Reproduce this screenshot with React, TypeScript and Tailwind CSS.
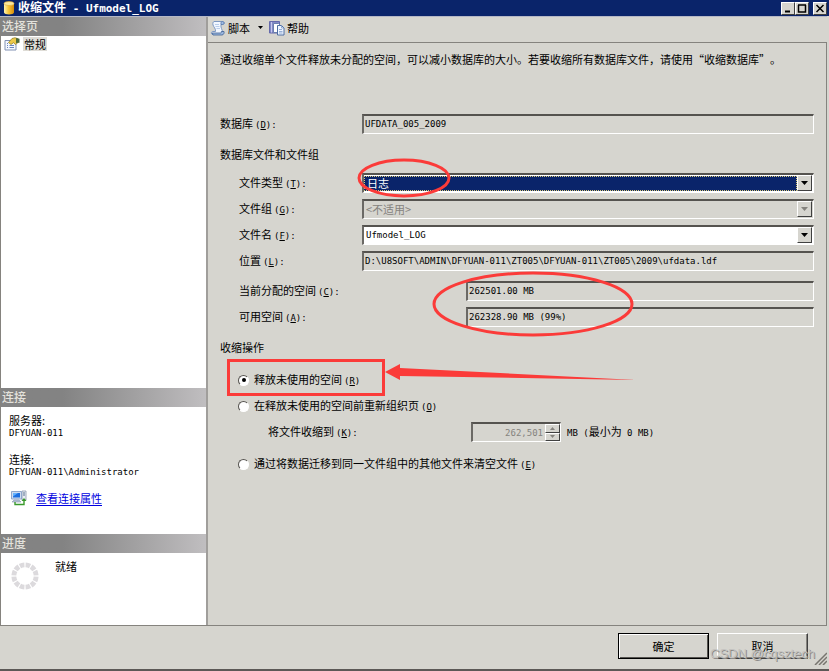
import type { ReactNode } from "react";

const MONO = "font-['DejaVu_Sans_Mono',monospace] text-[9px]";
const FIELD =
  "block h-5 min-w-0 flex-1 border border-t-2 border-t-[#55534f] border-l-2 border-l-[#6b6965] border-r-white border-b-white bg-[#d6d5cf] pl-px leading-4 pb-0.5 outline-none";
const RAISED = "border border-t-white border-l-white border-r-[#404040] border-b-[#404040] bg-[#d6d5cf]";

function Key({ k, colon = true }: { k: string; colon?: boolean }) {
  return (
    <span className={`${MONO} ml-0.5`}>
      (<u className="underline-offset-1">{k}</u>){colon && ":"}
    </span>
  );
}

function Row({ id, label, k, wide, children }: { id: string; label: string; k: string; wide?: boolean; children: ReactNode }) {
  return (
    <div className="flex h-5 items-center">
      <label htmlFor={id} className={wide ? "w-[227px] shrink-0" : "w-[123px] shrink-0"}>
        {label}
        <Key k={k} />
      </label>
      {children}
    </div>
  );
}

function Combo({ id, value, selected, disabled, mono }: { id: string; value: string; selected?: boolean; disabled?: boolean; mono?: boolean }) {
  return (
    <div
      className={`relative flex h-5 min-w-0 flex-1 border border-t-2 border-t-[#55534f] border-l-2 border-l-[#6b6965] border-r-white border-b-white ${
        disabled ? "bg-[#d6d5cf]" : "bg-white"
      }`}
    >
      <select
        id={id}
        disabled={disabled}
        className={`my-px min-w-0 flex-1 appearance-none pl-0.5 leading-[13px] outline-none ${mono ? MONO : "text-[11px]"} ${
          selected ? "mr-4 border border-dotted border-[#d8c878] bg-[#0a246a] text-white" : ""
        } ${disabled ? "text-[#85837e] opacity-100" : ""}`}
      >
        <option>{value}</option>
      </select>
      <span className={`pointer-events-none absolute top-0 right-px bottom-px flex w-[15px] items-center justify-center ${RAISED}`}>
        <svg width="7" height="4" className={disabled ? "text-[#85837e]" : "text-black"}>
          <path d="M0 0h7L3.5 4z" fill="currentColor" />
        </svg>
      </span>
    </div>
  );
}

function Radio({ id, label, k, checked }: { id: string; label: string; k: string; checked?: boolean }) {
  return (
    <div className="flex h-5 items-center gap-[5px]">
      <input
        type="radio"
        name="action"
        id={id}
        defaultChecked={checked}
        className="flex size-[11px] appearance-none items-center justify-center rounded-full border border-t-[#55534f] border-l-[#55534f] border-r-white border-b-white bg-white before:size-1 before:rounded-full checked:before:bg-black"
      />
      <label htmlFor={id}>
        {label}
        <Key k={k} colon={false} />
      </label>
    </div>
  );
}

function PanelHeader({ children }: { children: ReactNode }) {
  return (
    <h2 className="h-[19px] bg-linear-to-r from-[#838383] from-30% to-[#c0bec0] pl-px text-[12px] leading-[17px] font-medium text-[#e4e2dc]">
      {children}
    </h2>
  );
}

function DatabaseIcon() {
  return (
    <svg width="12" height="14" viewBox="0 0 12 14">
      <defs>
        <linearGradient id="gold">
          <stop offset="0" stopColor="#fff3b0" />
          <stop offset=".45" stopColor="#f7c53a" />
          <stop offset="1" stopColor="#d68c0a" />
        </linearGradient>
      </defs>
      <path d="M1 2.5v9c0 2.6 10 2.6 10 0v-9z" fill="url(#gold)" />
      <ellipse cx="6" cy="2.5" rx="5" ry="2" fill="#fbe9a0" stroke="#e0a52a" strokeWidth=".6" />
    </svg>
  );
}

function PageIcon() {
  return (
    <svg width="16" height="14" viewBox="0 0 16 14">
      <path d="M1 3.5h11v9.5H1z" fill="#f4f8ff" stroke="#8192b4" />
      <path d="M3 6.5h1M3 8.5h1M3 10.5h1M5.5 8.5h4.5M5.5 10.5h4.5" stroke="#6b86bd" />
      <path d="M4.500 5.500 8 1.500l3-.8 3 1v3.800L11.500 7.500l-2-1.800L7 7.500z" fill="#ecc94a" stroke="#8c7a22" strokeWidth=".7" />
      <path d="M12 1l3.500.7v4L12 6z" fill="#4f6b3a" />
    </svg>
  );
}

function ScriptIcon() {
  return (
    <svg width="16" height="16" viewBox="0 0 16 16">
      <path d="M4 1.5h8.500c2 0 2.200 3 0 3H11c-.6 3.500 1.500 5 1.500 7.500 0 1.500-.7 2.500-2 2.500H3C1 14.500.6 11.500 3 11.500h2.500C6 8.500 3.500 7 3 5 2.600 3 3 2 4 1.500z" fill="#f2f7ff" stroke="#7d98c2" />
      <path d="M12.500 1.500c-1.500 0-1.700 1.500-1.500 3h1.500c2.200 0 2-3 0-3z" fill="#9fbbe3" stroke="#5f7fb0" />
      <path d="M2 13h8.500c.8 0 1-.8.8-1.500H14c.5 1.500-.5 3.500-2 3.500H3z" fill="#9db9e0" stroke="#3f5f92" strokeWidth=".8" />
      <path d="M5 4.500h4M5.500 6.500h4M6.500 8.500h3.500" stroke="#b9cdea" />
    </svg>
  );
}

function HelpIcon() {
  return (
    <svg width="16" height="16" viewBox="0 0 16 16">
      <path d="M.5 1.500h10v11.500H.5z" fill="#8288c6" stroke="#6469ab" />
      <path d="M2.500 2v10.500" stroke="#c4c8ee" />
      <path d="M4.500 3.500h5l2 2v7h-7z" fill="#fff" stroke="#6a7fae" />
      <path d="M8.500 5.500h4l2.500 2.500v7H8.500z" fill="#eef5ff" stroke="#4f6fa3" />
      <path d="M12.500 5.500V8H15M10 9.500h3M10 11.500h3.500M10 13h3.500" fill="none" stroke="#7f9ccb" strokeWidth=".8" />
    </svg>
  );
}

function ServerIcon() {
  return (
    <svg width="16" height="16" viewBox="0 0 16 16">
      <path d="M11 1h4v9h-4z" fill="#e8edf4" stroke="#8a98ad" strokeWidth=".8" />
      <path d="M12 3h2M12 5h2" stroke="#59708f" />
      <path d="M.5 1.500h10v7.500H.5z" fill="#cfdcf0" stroke="#8fa6cb" />
      <path d="M2 3h7v4.500H2z" fill="#1d6fe0" />
      <path d="M2 3h5L2 6.500z" fill="#64b2ff" />
      <path d="M3 10h5l2 2H1z" fill="#b6c3d8" stroke="#8796b0" strokeWidth=".6" />
      <path d="M4 12v2.500h9V10" fill="none" stroke="#3a9a2c" strokeWidth="1.400" />
      <path d="M10.500 11 13 8l2.500 3z" fill="#3a9a2c" />
    </svg>
  );
}

function Spinner() {
  return (
    <svg width="28" height="28" viewBox="0 0 28 28">
      {Array.from({ length: 12 }, (_, i) => (
        <path key={i} d="M11.200.7a14 14 0 0 1 5.600 0l-1 4.800a9 9 0 0 0-3.600 0z" fill="#dcdadd" transform={`rotate(${i * 30 + 15} 14 14)`} />
      ))}
    </svg>
  );
}

function Marks() {
  return (
    <svg width="460" height="420" viewBox="0 0 460 420" fill="none" stroke="#fb3b39" className="pointer-events-none absolute top-0 left-0">
      <ellipse cx="196" cy="161" rx="45" ry="18" strokeWidth="3" />
      <ellipse cx="325" cy="287" rx="99" ry="31" strokeWidth="3" />
      <path d="M20.500 343.500h155v34h-155z" strokeWidth="3" />
      <path d="M177 355l15-8v4l236 12-236-4v4z" fill="#fb3b39" stroke="none" />
    </svg>
  );
}

function TitleButton({ label, children }: { label: string; children: ReactNode }) {
  return (
    <button aria-label={label} className={`flex h-[13px] w-3.5 items-center justify-center ${RAISED}`}>
      <svg width="10" height="9" viewBox="0 0 10 9" fill="none" stroke="#000">
        {children}
      </svg>
    </button>
  );
}

export default function App() {
  return (
    <div className="flex min-h-screen flex-col border-b-2 border-[#5c5856] bg-[#d6d5cf] font-['Noto_Sans_CJK_SC',sans-serif] text-[11px] leading-4 text-black [text-spacing-trim:space-all]">
      <header className="flex h-4 items-center bg-[#0a246a] pr-0.5 pl-[3px] text-white">
        <DatabaseIcon />
        <h1 className="ml-[3px] flex-1 text-[12px] leading-4 font-bold">
          收缩文件
          <span className="font-['DejaVu_Sans_Mono',monospace] text-[11px] whitespace-pre"> - Ufmodel_LOG</span>
        </h1>
        <TitleButton label="最小化"><path d="M2 7.500h5" strokeWidth="2" /></TitleButton>
        <TitleButton label="最大化"><path d="M1 1h8M1.500 1v7h7V1" strokeWidth="1.500" /></TitleButton>
        <span className="w-1" />
        <TitleButton label="关闭"><path d="M1.500 1l7 7M8.500 1l-7 7" strokeWidth="1.500" /></TitleButton>
      </header>

      <div className="mr-0.5 flex flex-1 border-t border-b border-t-[#b5b8c6] border-b-[#85837e]">
        <aside className="flex w-[208px] shrink-0 flex-col border-r-2 border-l border-r-[#a09e9b] border-l-[#85837e] bg-white">
          <PanelHeader>选择页</PanelHeader>
          <div className="flex flex-1 items-start gap-[3px] pt-px pl-[3px]">
            <PageIcon />
            <button className="h-3.5 bg-[#dedcd6] px-px leading-[14px]">常规</button>
          </div>
          <PanelHeader>连接</PanelHeader>
          <div className="h-[127px] pt-[7px] pl-2 leading-3">
            <p className="leading-[13px]">服务器:</p>
            <p className={MONO}>DFYUAN-011</p>
            <p className="mt-3.5 leading-[13px]">连接:</p>
            <p className={MONO}>DFYUAN-011\Administrator</p>
            <div className="mt-3 flex items-center gap-[9px] pl-0.5">
              <ServerIcon />
              <a href="#" className="text-[#0000e0] underline underline-offset-2">查看连接属性</a>
            </div>
          </div>
          <PanelHeader>进度</PanelHeader>
          <div className="flex h-[72px] gap-4 pt-[5px] pl-2.5">
            <div className="pt-1"><Spinner /></div>
            <p>就绪</p>
          </div>
        </aside>

        <main className="relative flex min-w-0 flex-1 flex-col">
          <div className="flex h-[26px] items-center border-b border-[#85837e] pb-1 pl-0.5">
            <button className="flex items-center gap-0.5">
              <ScriptIcon />
              脚本
              <svg width="5" height="3" className="ml-1.5"><path d="M0 0h5L2.500 3z" /></svg>
            </button>
            <button className="ml-1.5 flex items-center gap-0.5">
              <HelpIcon />
              帮助
            </button>
          </div>

          <form className="flex-1 border-r border-[#85837e] pt-2 pr-3 pb-4 pl-3">
            <p>通过收缩单个文件释放未分配的空间，可以减小数据库的大小。若要收缩所有数据库文件，请使用“收缩数据库”。</p>

            <div className="mt-[47px] flex h-5 items-center">
              <label htmlFor="database" className="w-[142px] shrink-0">数据库<Key k="D" /></label>
              <input id="database" readOnly defaultValue="UFDATA_005_2009" className={`${FIELD} ${MONO}`} />
            </div>

            <h3 className="mt-3">数据库文件和文件组</h3>
            <div className="mt-[11px] flex flex-col gap-1.5 pl-[19px]">
              <Row id="type" label="文件类型" k="T"><Combo id="type" value="日志" selected /></Row>
              <Row id="group" label="文件组" k="G"><Combo id="group" value="<不适用>" disabled /></Row>
              <Row id="name" label="文件名" k="F"><Combo id="name" value="Ufmodel_LOG" mono /></Row>
              <Row id="path" label="位置" k="L">
                <input id="path" readOnly defaultValue="D:\U8SOFT\ADMIN\DFYUAN-011\ZT005\DFYUAN-011\ZT005\2009\ufdata.ldf" className={`${FIELD} ${MONO}`} />
              </Row>
            </div>
            <div className="mt-2.5 flex flex-col gap-1.5 pl-[19px]">
              <Row id="current" label="当前分配的空间" k="C" wide>
                <input id="current" readOnly defaultValue="262501.00 MB" className={`${FIELD} ${MONO}`} />
              </Row>
              <Row id="free" label="可用空间" k="A" wide>
                <input id="free" readOnly defaultValue="262328.90 MB (99%)" className={`${FIELD} ${MONO}`} />
              </Row>
            </div>

            <h3 className="mt-3">收缩操作</h3>
            <div className="mt-[15px] flex flex-col gap-1.5 pl-[18px]">
              <Radio id="release" label="释放未使用的空间" k="R" checked />
              <Radio id="reorganize" label="在释放未使用的空间前重新组织页" k="O" />
              <div className="flex h-5 items-center pl-[30px]">
                <label htmlFor="target" className="w-[203px] shrink-0">将文件收缩到<Key k="K" /></label>
                <div className="flex h-5 w-[90px] border border-t-2 border-t-[#55534f] border-l-2 border-l-[#6b6965] border-r-white border-b-white">
                  <input id="target" disabled defaultValue="262,501" className={`min-w-0 flex-1 pr-0.5 text-right text-[#85837e] ${MONO}`} />
                  <div className="flex w-[15px] flex-col">
                    <button type="button" disabled aria-label="增加" className={`flex flex-1 items-center justify-center ${RAISED}`}>
                      <svg width="5" height="3" fill="#85837e"><path d="M0 3h5L2.500 0z" /></svg>
                    </button>
                    <button type="button" disabled aria-label="减少" className={`flex flex-1 items-center justify-center ${RAISED}`}>
                      <svg width="5" height="3" fill="#85837e"><path d="M0 0h5L2.500 3z" /></svg>
                    </button>
                  </div>
                </div>
                <span className="ml-1.5 whitespace-pre">
                  <span className={MONO}>MB (</span>最小为<span className={MONO}> 0 MB)</span>
                </span>
              </div>
            </div>
            <div className="mt-3 pl-[18px]">
              <Radio id="empty" label="通过将数据迁移到同一文件组中的其他文件来清空文件" k="E" />
            </div>
          </form>
          <Marks />
        </main>
      </div>

      <footer className="relative flex h-[43px] items-start justify-end gap-2 pt-[7px] pr-[21px]">
        <button className="h-[26px] w-[91px] border border-black bg-[#d6d5cf] shadow-[inset_1px_1px_0_#fff,inset_-1px_-1px_0_#55534f]">确定</button>
        <button className={`h-[26px] w-[91px] shadow-[inset_-1px_-1px_0_#85837e] ${RAISED}`}>取消</button>
        <span className="pointer-events-none absolute top-5 right-3.5 font-['Liberation_Sans',sans-serif] text-[13px] text-[#c4c3c0] [text-shadow:1px_1px_0_#8d8b89]">
          CSDN @cqsztech
        </span>
        <svg width="13" height="13" className="absolute right-0.5 bottom-1" stroke="#77756f" strokeWidth="1.500">
          <path d="M1 13 13 1M5 13l8-8M9 13l4-4" />
        </svg>
      </footer>
    </div>
  );
}
